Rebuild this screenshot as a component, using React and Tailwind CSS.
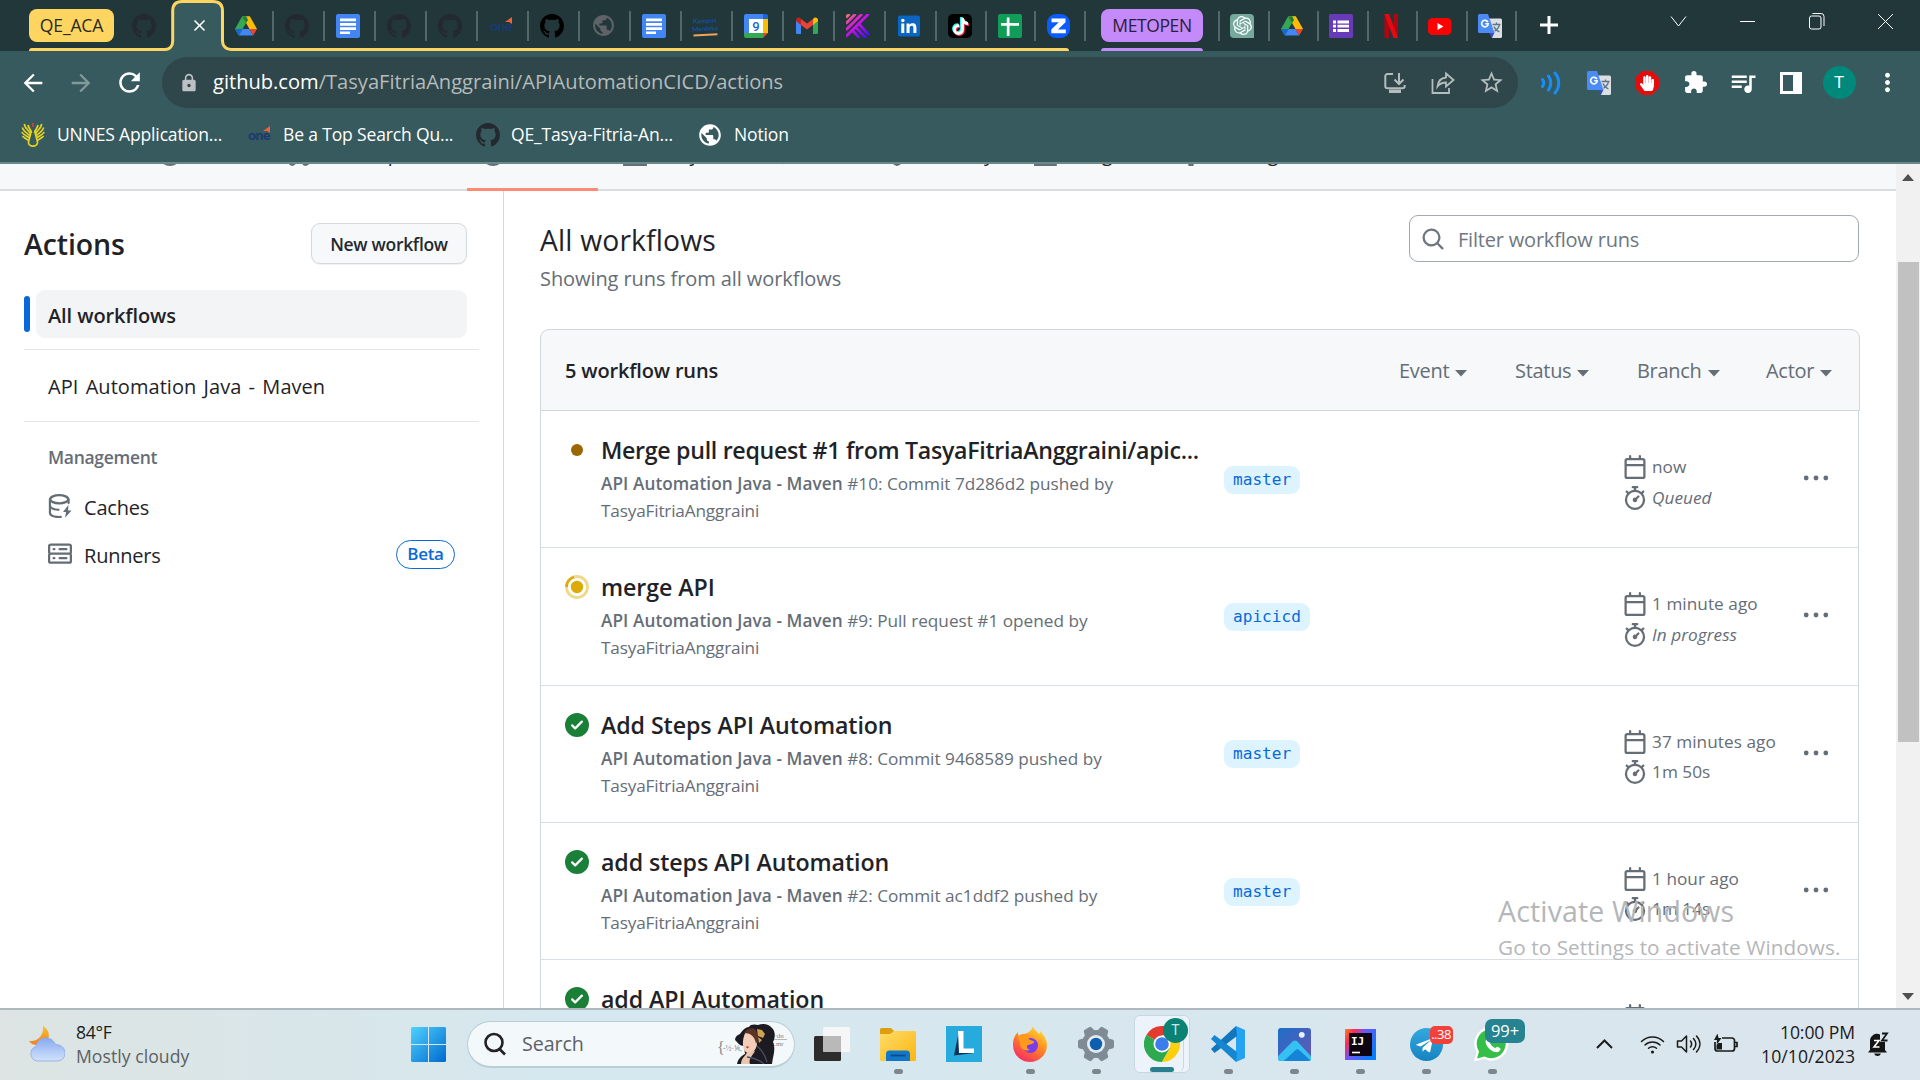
import React from "react";
import {
  MdPublic, MdExtension, MdQueueMusic, MdLock, MdStarBorder, MdRefresh, MdArrowBack,
  MdArrowForward, MdMoreVert, MdClose,
} from "react-icons/md";
import { FaHandPaper, FaTelegramPlane, FaTiktok } from "react-icons/fa";
import { SiOpenai } from "react-icons/si";

/* ---------- octicons ---------- */

function Oct({ d, className = "size-6" }) {
  return (
    <svg viewBox="0 0 16 16" fill="currentColor" className={`${className} shrink-0`}>
      <path d={d} />
    </svg>
  );
}

const MARK =
  "M8 0c4.42 0 8 3.58 8 8a8.013 8.013 0 0 1-5.45 7.59c-.4.08-.55-.17-.55-.38 0-.27.01-1.13.01-2.2 0-.75-.25-1.23-.54-1.48 1.78-.2 3.65-.88 3.65-3.95 0-.88-.31-1.59-.82-2.15.08-.2.36-1.02-.08-2.12 0 0-.67-.22-2.2.82-.64-.18-1.32-.27-2-.27-.68 0-1.36.09-2 .27-1.53-1.03-2.2-.82-2.2-.82-.44 1.1-.16 1.92-.08 2.12-.51.56-.82 1.28-.82 2.15 0 3.06 1.86 3.75 3.64 3.95-.23.2-.44.55-.51 1.07-.46.21-1.61.55-2.33-.66-.15-.24-.6-.83-1.23-.82-.67.01-.27.38.01.53.34.19.73.9.82 1.13.16.45.68 1.31 2.69.94 0 .67.01 1.3.01 1.49 0 .21-.15.45-.55.38A7.995 7.995 0 0 1 0 8c0-4.42 3.58-8 8-8Z";
const CALENDAR =
  "M4.75 0a.75.75 0 0 1 .75.75V2h5V.75a.75.75 0 0 1 1.5 0V2h1.25c.966 0 1.75.784 1.75 1.75v10.5A1.75 1.75 0 0 1 13.25 16H2.75A1.75 1.75 0 0 1 1 14.25V3.75C1 2.784 1.784 2 2.75 2H4V.75A.75.75 0 0 1 4.75 0ZM2.5 7.5v6.75c0 .138.112.25.25.25h10.5a.25.25 0 0 0 .25-.25V7.5Zm10.75-4H2.75a.25.25 0 0 0-.25.25V6h11V3.75a.25.25 0 0 0-.25-.25Z";
const STOPWATCH =
  "M5.75.75A.75.75 0 0 1 6.5 0h3a.75.75 0 0 1 0 1.5h-.75v1l-.001.041a6.724 6.724 0 0 1 3.464 1.435l.007-.006.75-.75a.749.749 0 0 1 1.275.326.749.749 0 0 1-.215.734l-.75.75-.006.007a6.75 6.75 0 1 1-10.548 0L2.72 5.03l-.75-.75a.751.751 0 0 1 .018-1.042.751.751 0 0 1 1.042-.018l.75.75.007.006A6.72 6.72 0 0 1 7.25 2.541V1.5H6.5a.75.75 0 0 1-.75-.75ZM8 14.5a5.25 5.25 0 1 0-.001-10.501A5.25 5.25 0 0 0 8 14.5Zm.389-6.7 1.33-1.33a.75.75 0 1 1 1.061 1.06L9.45 8.861A1.503 1.503 0 0 1 8 10.75a1.499 1.499 0 1 1 .389-2.95Z";
const CHECK =
  "M8 16A8 8 0 1 1 8 0a8 8 0 0 1 0 16Zm3.78-9.72a.751.751 0 0 0-.018-1.042.751.751 0 0 0-1.042-.018L6.75 9.19 5.28 7.72a.751.751 0 0 0-1.042.018.751.751 0 0 0-.018 1.042l2 2a.75.75 0 0 0 1.06 0Z";
const SEARCH =
  "M10.68 11.74a6 6 0 0 1-7.922-8.982 6 6 0 0 1 8.982 7.922l3.04 3.04a.749.749 0 0 1-.326 1.275.749.749 0 0 1-.734-.215ZM11.5 7a4.499 4.499 0 1 0-8.997 0A4.499 4.499 0 0 0 11.5 7Z";
const SERVER =
  "M1.75 1h12.5c.966 0 1.75.784 1.75 1.75v4c0 .372-.116.717-.314 1 .198.283.314.628.314 1v4a1.75 1.75 0 0 1-1.75 1.75H1.75A1.75 1.75 0 0 1 0 12.75v-4c0-.358.109-.707.314-1a1.739 1.739 0 0 1-.314-1v-4C0 1.784.784 1 1.75 1ZM1.5 2.75v4c0 .138.112.25.25.25h12.5a.25.25 0 0 0 .25-.25v-4a.25.25 0 0 0-.25-.25H1.75a.25.25 0 0 0-.25.25Zm.25 5.75a.25.25 0 0 0-.25.25v4c0 .138.112.25.25.25h12.5a.25.25 0 0 0 .25-.25v-4a.25.25 0 0 0-.25-.25ZM7 4.75A.75.75 0 0 1 7.75 4h4.5a.75.75 0 0 1 0 1.5h-4.5A.75.75 0 0 1 7 4.75ZM7.75 10h4.5a.75.75 0 0 1 0 1.5h-4.5a.75.75 0 0 1 0-1.5ZM3 4.75A.75.75 0 0 1 3.75 4h.5a.75.75 0 0 1 0 1.5h-.5A.75.75 0 0 1 3 4.75ZM3.75 10h.5a.75.75 0 0 1 0 1.5h-.5a.75.75 0 0 1 0-1.5Z";

function CacheIcon() {
  return (
    <svg viewBox="0 0 16 16" className="size-6 shrink-0" fill="none" stroke="currentColor" strokeWidth="1.5" strokeLinecap="round">
      <ellipse cx="7.5" cy="3.5" rx="6" ry="2.7" />
      <path d="M1.3 3.5v9c0 1.3 2 2.5 4.7 2.8.9.1 1.6.1 2.5 0M1.3 8c.4 1.2 2.4 2.3 5.700 2.500M13.700 3.500v2.500" />
      <path d="M13.600 7.300 10 12h2l-.6 3.800L15.700 11h-2.300z" fill="currentColor" stroke="none" />
    </svg>
  );
}

function Caret() {
  return (
    <svg viewBox="0 0 12 7" className="mt-[4px] h-[7px] w-3 shrink-0" fill="currentColor">
      <path d="M0 0h12L6 6.500z" />
    </svg>
  );
}

/* ---------- favicons ---------- */

function Drive() {
  return (
    <svg viewBox="0 0 24 24" className="size-6 shrink-0">
      <path d="M8.200 2.300h7.600L12 9z" fill="#188038" />
      <path d="M8.200 2.300 1 15l3.800 6.500L12 9z" fill="#34a853" />
      <path d="M15.800 2.300 23 15h-7.600L8.400 2.300z" fill="#fbbc04" />
      <path d="M8.200 2.300h4L14 6l-2 3z" fill="#188038" />
      <path d="M4.800 21.500h14.400L15.400 15H8.600z" fill="#4285f4" />
      <path d="M1 15h7.600l-3.800 6.500z" fill="#1967d2" />
      <path d="M23 15h-7.600l3.800 6.500z" fill="#ea4335" />
    </svg>
  );
}

function Docs() {
  return (
    <svg viewBox="0 0 24 24" className="size-6 shrink-0">
      <rect width="24" height="24" rx="2" fill="#4285f4" />
      <path d="M4 4.500h16v2.800H4zM4 9h16v2.800H4zM4 13.300h16V16H4zM4 17.500h10v2.500H4z" fill="#fff" />
    </svg>
  );
}

function One() {
  return (
    <span className="relative flex h-6 w-6 shrink-0 items-center justify-center">
      <span className="font-[Lato] text-[14px] font-black leading-none tracking-[-0.500px] text-[#1b3a6e]">one</span>
      <svg viewBox="0 0 8 8" className="absolute right-0 top-[3px] size-2">
        <path d="M0 5 7 0v7L4 5z" fill="#f0603a" />
      </svg>
    </span>
  );
}

function Kampus() {
  return (
    <span className="flex h-6 w-6 shrink-0 -rotate-3 flex-col items-center justify-center font-[Lato] text-[6.500px] font-black leading-[8px] text-[#15508f]">
      <span>Kampus</span>
      <span>Merdeka</span>
      <span className="mt-[1px] h-[2px] w-6 bg-[#f2a25c]" />
    </span>
  );
}

function Cal() {
  return (
    <svg viewBox="0 0 24 24" className="size-6 shrink-0">
      <path d="M2 0h17v5H5v14H0V2a2 2 0 0 1 2-2z" fill="#4285f4" />
      <path d="M19 0h3a2 2 0 0 1 2 2v3h-5z" fill="#1967d2" />
      <path d="M19 5h5v14h-5z" fill="#fbbc04" />
      <path d="M0 19h19v5H2a2 2 0 0 1-2-2z" fill="#34a853" />
      <path d="M19 19h5l-5 5z" fill="#ea4335" />
      <path d="M5 5h14v14H5z" fill="#fff" />
      <text x="12" y="16.700" textAnchor="middle" fontFamily="Roboto" fontSize="13" fontWeight="500" fill="#1967d2">9</text>
    </svg>
  );
}

function Gmail() {
  return (
    <svg viewBox="0 0 24 24" className="size-6 shrink-0">
      <path d="M1 6.500 6 10v10H2.500A1.500 1.500 0 0 1 1 18.500z" fill="#4285f4" />
      <path d="M23 6.500 18 10v10h3.500a1.500 1.500 0 0 0 1.500-1.500z" fill="#34a853" />
      <path d="M18 5v6l5-4V6c0-2-2.300-3.200-4-2z" fill="#fbbc04" />
      <path d="M6 5v6L1 7V6c0-2 2.300-3.200 4-2z" fill="#c5221f" />
      <path d="m6 5 6 4.500L18 5v6l-6 4.500L6 11z" fill="#ea4335" />
    </svg>
  );
}

function KLogo() {
  return (
    <svg viewBox="0 0 24 24" className="size-6 shrink-0">
      <defs>
        <linearGradient id="kg" gradientUnits="userSpaceOnUse" x1="0" y1="0" x2="22" y2="24">
          <stop offset="0" stopColor="#f77b6b" />
          <stop offset=".4" stopColor="#d914e0" />
          <stop offset="1" stopColor="#3a10f5" />
        </linearGradient>
      </defs>
      <g stroke="url(#kg)" strokeWidth="2.800" fill="none">
        <path d="M0 3.500 3.500 0M0 9.500 9.500 0M0 16 16 0M0 22.500 22.500 0M9.500 13l10.500 11M13 10l10 11M7 17l6.500 7" />
      </g>
    </svg>
  );
}

function LinkedIn() {
  return (
    <svg viewBox="0 0 24 24" className="size-6 shrink-0">
      <rect x="1" y="1.500" width="22" height="21" rx="2" fill="#0a66c2" />
      <path d="M4.300 9.500h3V19h-3zM9.500 9.500h2.900v1.300c.5-.9 1.600-1.600 3.100-1.600 3.100 0 3.900 1.900 3.900 4.600V19h-3v-4.700c0-1.200-.1-2.600-1.700-2.600s-2.100 1.200-2.100 2.500V19h-3.100z" fill="#fff" />
      <circle cx="5.800" cy="6.500" r="1.750" fill="#fff" />
    </svg>
  );
}

function TikTok() {
  return (
    <span className="relative flex size-6 shrink-0 items-center justify-center rounded-[5px] bg-black">
      <FaTiktok className="absolute left-[3px] top-[3px] size-[17px] text-[#25f4ee]" />
      <FaTiktok className="absolute left-[5px] top-[5px] size-[17px] text-[#fe2c55]" />
      <FaTiktok className="absolute left-[4px] top-[4px] size-[17px] text-white" />
    </span>
  );
}

function Sheets() {
  return (
    <svg viewBox="0 0 24 24" className="size-6 shrink-0">
      <rect width="24" height="24" rx="2" fill="#0f9d58" />
      <path d="M8.800 3.500h2.700V9H21v2.700h-9.500V22H8.800V11.700H3V9h5.800z" fill="#fff" />
    </svg>
  );
}

function ZoomLogo() {
  return (
    <svg viewBox="0 0 24 24" className="size-6 shrink-0">
      <rect width="23" height="24" rx="9" fill="#0b5cff" />
      <path d="M4.500 4.500h14v3.700l-7.500 7.300h7.800v3.800H4.300v-3.700l7.500-7.300H4.500z" fill="#fff" />
    </svg>
  );
}

function Gpt() {
  return (
    <span className="flex size-6 shrink-0 items-center justify-center rounded-[4px] rounded-br-none bg-[#75a99c]">
      <SiOpenai className="size-[19px] text-white" />
    </span>
  );
}

function Forms() {
  return (
    <svg viewBox="0 0 24 24" className="size-6 shrink-0">
      <rect width="24" height="24" rx="1.500" fill="#673ab7" />
      <path d="M4 6.500h3v3H4zM8.500 6.500H20v3H8.500zM4 10.700h3v2.800H4zM8.500 10.700H20v2.800H8.500zM4 15h3v3H4zM8.500 15H20v3H8.500z" fill="#fff" />
    </svg>
  );
}

function Netflix() {
  return (
    <svg viewBox="0 0 24 24" className="size-6 shrink-0">
      <path d="M5.500 0H10v24H5.500zM14.500 0H19v24h-4.500z" fill="#b1060f" />
      <path d="M5.500 0H10l9 24h-4.500z" fill="#e50914" />
    </svg>
  );
}

function YouTube() {
  return (
    <svg viewBox="0 0 24 24" className="size-6 shrink-0">
      <rect x="0" y="4" width="23.500" height="17" rx="4.500" fill="#f00" />
      <path d="m9.500 9 6 3.500-6 3.500z" fill="#fff" />
    </svg>
  );
}

function Translate() {
  return (
    <svg viewBox="0 0 24 24" className="size-6 shrink-0">
      <path d="M9 4.500h13.500A1.500 1.500 0 0 1 24 6v16.500a1.500 1.500 0 0 1-1.500 1.500H14z" fill="#dcdfe3" />
      <path d="m11 19 5.500-.5L14 24z" fill="#3a50b8" />
      <path d="M1.500 0H10l6.500 19h-15A1.500 1.500 0 0 1 0 17.500v-16A1.500 1.500 0 0 1 1.500 0z" fill="#4c8bf5" />
      <path d="M9.900 8.200a3.300 3.300 0 1 0 .3 1.600H7.200" stroke="#fff" strokeWidth="1.600" fill="none" />
      <path d="M14.500 10.500h8M18.500 8.500v2M21.500 10.500c-.6 3-2.500 5.300-5 6.800M16 12.500c1 2.500 3 4.500 5.500 5.500" stroke="#5f7688" strokeWidth="1.300" fill="none" />
    </svg>
  );
}

const Hub = () => <Oct d={MARK} className="size-6 text-[#24292f]" />;

/* ---------- browser chrome ---------- */

function Tab({ w, children }) {
  return (
    <div className={`flex h-[51px] items-center ${w}`}>
      {children}
      <span className="ml-auto h-[30px] w-[2px] bg-[#53676a]" />
    </div>
  );
}

function TabStrip() {
  const first = "w-[51px] pl-[11px]";
  return (
    <div className="flex h-[51px] shrink-0 bg-[#21373a]">
      <div className="relative flex w-[1087px] shrink-0 pl-[29px]">
        <div className="mt-[9px] flex h-[33px] w-[85px] shrink-0 items-center justify-center rounded-[8px] bg-[#ffd561] text-[17.600px] tracking-[-0.200px] text-[#2a2a20]">
          QE_ACA
        </div>
        <div className="ml-[18px] flex items-center">
          <Hub />
        </div>
        <span className="absolute bottom-0 left-[29px] h-[3px] w-[136px] rounded-tl-[3px] bg-[#ffd561]" />
        <span className="absolute bottom-0 left-[230px] h-[3px] w-[839px] rounded-tr-[3px] bg-[#ffd561]" />
        <div className="relative ml-[9px] flex h-[51px] w-[58px] shrink-0 items-center">
          <svg viewBox="0 0 66 51" className="absolute left-0 top-0 h-[51px] w-[66px]">
            <path d="M0 49.500C5 49.500 7.700 46 7.700 41V11C7.700 4 11 1.500 17 1.500H48C55 1.500 57.500 5 57.500 11V41C57.500 46 61 49.500 66 49.500V51H0Z" fill="#365a5d" />
            <path d="M0 49.500C5 49.500 7.700 46 7.700 41V11C7.700 4 11 1.500 17 1.500H48C55 1.500 57.500 5 57.500 11V41C57.500 46 61 49.500 66 49.500" fill="none" stroke="#ffd561" strokeWidth="3" />
          </svg>
          <MdClose className="relative ml-[25px] size-[19px] text-white" />
        </div>
        <Tab w={first}><Drive /></Tab>
        <Tab w={first}><Hub /></Tab>
        <Tab w={first}><Docs /></Tab>
        <Tab w={first}><Hub /></Tab>
        <Tab w={first}><Hub /></Tab>
        <Tab w={first}><One /></Tab>
        <Tab w={first}><Oct d={MARK} className="size-6 text-black" /></Tab>
        <Tab w={first}><MdPublic className="size-[25px] text-[#5f6368]" /></Tab>
        <Tab w={first}><Docs /></Tab>
        <Tab w={first}><Kampus /></Tab>
        <Tab w={first}><Cal /></Tab>
        <Tab w={first}><Gmail /></Tab>
        <Tab w={first}><KLogo /></Tab>
        <Tab w={first}><LinkedIn /></Tab>
        <Tab w="w-[50px] pl-[11px]"><TikTok /></Tab>
        <Tab w="w-[49px] pl-[11px]"><Sheets /></Tab>
        <Tab w="w-[50px] pl-[11px]"><ZoomLogo /></Tab>
      </div>
      <div className="ml-[14px] flex w-[102px] shrink-0 flex-col justify-between pt-[9px]">
        <div className="flex h-[33px] items-center justify-center rounded-[8px] bg-[#c58af9] text-[17.500px] tracking-[-0.400px] text-[#2a2038]">
          METOPEN
        </div>
        <span className="h-[3px] rounded-t-[3px] bg-[#c58af9]" />
      </div>
      <span className="ml-[15px] mt-[11px] h-[30px] w-[2px] bg-[#53676a]" />
      <Tab w="w-[50px] pl-[10px]"><Gpt /></Tab>
      <Tab w="w-[49px] pl-[10px]"><Drive /></Tab>
      <Tab w="w-[50px] pl-[10px]"><Forms /></Tab>
      <Tab w="w-[49px] pl-[10px]"><Netflix /></Tab>
      <Tab w="w-[50px] pl-[10px]"><YouTube /></Tab>
      <Tab w="w-[49px] pl-[10px]"><Translate /></Tab>
      <svg viewBox="0 0 20 20" className="ml-[22px] mt-[15px] size-5 shrink-0">
        <path d="M10 1v18M1 10h18" stroke="#fff" strokeWidth="3" />
      </svg>
      <div className="ml-auto flex h-[43px] shrink-0 items-center text-white">
        <WinButton><path d="M2 4.500 9.500 14 17 4.500" /></WinButton>
        <WinButton><path d="M2 9.500h15" /></WinButton>
        <WinButton><path d="M2.500 6a2 2 0 0 1 2-2h7.500a2 2 0 0 1 2 2v9a2 2 0 0 1-2 2h-7.500a2 2 0 0 1-2-2zM5.500 1.500h8.500a3 3 0 0 1 3 3v9.500" /></WinButton>
        <WinButton><path d="m2 2 15 15M17 2 2 17" /></WinButton>
      </div>
    </div>
  );
}

function WinButton({ children }) {
  return (
    <span className="flex w-[69px] justify-center">
      <svg viewBox="0 0 19 19" className="size-[19px]" fill="none" stroke="currentColor" strokeWidth="1">{children}</svg>
    </span>
  );
}

function Slot({ children }) {
  return <span className="flex w-12 shrink-0 items-center justify-center">{children}</span>;
}

function Toolbar() {
  return (
    <div className="flex h-[63px] shrink-0 items-center bg-[#365a5d] pl-[9px] text-white">
      <Slot><MdArrowBack className="size-[28px]" /></Slot>
      <Slot><MdArrowForward className="size-[28px] text-[#839a9c]" /></Slot>
      <Slot><MdRefresh className="size-[31px]" /></Slot>
      <div className="ml-[9px] flex h-[51px] w-[1356px] shrink-0 items-center rounded-full bg-[#2f464a] pl-[17px] pr-[3px] text-[#b4bcbd]">
        <MdLock className="size-[20px] text-[#bdc1c6]" />
        <span className="ml-[14px] text-[20.100px]">
          <span className="text-white">github.com</span>/TasyaFitriaAnggraini/APIAutomationCICD/actions
        </span>
        <span className="ml-auto flex">
          <Slot>
            <svg viewBox="0 0 24 24" className="size-6" fill="none" stroke="currentColor" strokeWidth="2">
              <path d="M10 3H4.500A2.200 2.200 0 0 0 2.300 5.200V15c0 1.200 1 2.200 2.200 2.200h15c1.200 0 2.200-1 2.200-2.200v-1M16 2v10M11.500 8.500 16 13l4.500-4.500" />
              <path d="M6 18.500h12V22H6z" fill="currentColor" stroke="none" />
            </svg>
          </Slot>
          <Slot>
            <svg viewBox="0 0 24 24" className="size-6" fill="none" stroke="currentColor" strokeWidth="1.800">
              <path d="M1.500 8v14H18v-5M15 2.500l7.500 6.500-7.500 6.500v-4c-4 0-6.500 1.300-8.500 4C7 10.500 10 7 15 6.500z" />
            </svg>
          </Slot>
          <Slot><MdStarBorder className="size-[27px]" /></Slot>
        </span>
      </div>
      <div className="ml-[9px] flex">
        <Slot>
          <svg viewBox="0 0 22 24" className="h-6 w-[22px]" fill="none" stroke="#1a8cf5" strokeWidth="3" strokeLinecap="round">
            <path d="M2.500 8.500c1.500 2 1.500 5 0 7M8.500 5c3 4 3 10 0 14M15 2c5 6 5 14 0 20" />
          </svg>
        </Slot>
        <Slot><Translate /></Slot>
        <Slot>
          <span className="relative flex size-6 items-center justify-center">
            <svg viewBox="0 0 24 24" className="absolute size-6"><path d="M7 0h10l7 7v10l-7 7H7l-7-7V7z" fill="#e40d0d" /></svg>
            <FaHandPaper className="relative size-[16px]" />
          </span>
        </Slot>
        <Slot><MdExtension className="size-[25px]" /></Slot>
        <Slot><MdQueueMusic className="size-[30px]" /></Slot>
        <Slot>
          <svg viewBox="0 0 22 22" className="size-[22px]"><path d="M0 0h22v22H0zM3 3v16h10V3z" fill="#fff" fillRule="evenodd" /></svg>
        </Slot>
        <Slot><span className="flex size-[33px] items-center justify-center rounded-full bg-[#00897b] font-[Roboto] text-[17px] text-white">T</span></Slot>
        <Slot><MdMoreVert className="size-[29px]" /></Slot>
      </div>
    </div>
  );
}

function Bookmarks() {
  return (
    <div className="flex h-[50px] shrink-0 items-center border-b-2 border-[#6a8789] bg-[#365a5d] pb-[7px] pl-[21px] text-[17.500px] tracking-[-0.150px] text-white">
      <svg viewBox="0 0 24 24" className="size-6" fill="none" stroke="#e8d322" strokeWidth="1.700">
        <path d="M3.500.8c-.5 3.500 3 5 6 10M1.500 4.500c0 3 4 5 7.500 8.500M.8 9c1.200 2.500 4 3.500 7.500 6M1.500 13c1.500 2 4 2.500 6 4.500M7 2c.5 3 3 5 3.500 8M20.500.8c.5 3.500-3 5-6 10M22.500 4.500c0 3-4 5-7.500 8.500M23.200 9c-1.200 2.500-4 3.500-7.500 6M22.500 13c-1.500 2-4 2.500-6 4.500M17 2c-.5 3-3 5-3.500 8M10 7c0 6-2.500 9-2.500 12.500a4.500 3.600 0 0 0 9 0C16.500 16 14 13 14 7" />
        <path d="M12 0v4" stroke="#e53935" />
      </svg>
      <span className="ml-[12px] w-[190px]">UNNES Application...</span>
      <One />
      <span className="ml-[12px] w-[193px]">Be a Top Search Qu...</span>
      <Hub />
      <span className="ml-[11px] w-[186px]">QE_Tasya-Fitria-An...</span>
      <MdPublic className="size-[26px]" />
      <span className="ml-[11px]">Notion</span>
    </div>
  );
}

/* ---------- GitHub page ---------- */

const navIcons = {
  code: "m5 4-4 4 4 4M11 4l4 4-4 4",
  issue: "M8 .8a7.200 7.200 0 1 0 0 14.400A7.200 7.200 0 0 0 8 .8zM8 7.500v1",
  pull: "M3.500 5.500v7M12.500 12V6a2 2 0 0 0-2-2H8M1.800 13.500a1.700 1.700 0 1 0 3.400 0 1.700 1.700 0 0 0-3.400 0M10.800 13.500a1.700 1.700 0 1 0 3.400 0 1.700 1.700 0 0 0-3.400 0",
  play: "M8 .8a7.200 7.200 0 1 0 0 14.400A7.200 7.200 0 0 0 8 .8zM6.500 5.500v5l4-2.500z",
  table: "M.8 2h14.400v13.200H.8zM.8 6h14.400M5.500 6v9",
  book: "M8 13.500V3.500M.8 2h5L8 3.500 10.200 2h5v11H10L8 14l-2-1H.8z",
  shield: "M8 .8 14 3v5c0 4-3 6-6 7.300C5 14 2 12 2 8V3z",
  graph: "M.8 1v14.200h14.400M4 11l3-3 3 2 5-5",
  gear: "M8 5.500a2.500 2.500 0 1 0 0 5 2.500 2.500 0 0 0 0-5zM7 .8h2l.5 2 2 1 2-.6 1 1.700-1.400 1.600v2.500l1.400 1.600-1 1.700-2-.6-2 1-.5 2.500H7l-.5-2.500-2-1-2 .6-1-1.700 1.400-1.600V6.500L1.500 4.900l1-1.700 2 .6 2-1z",
};

function NavItem({ w, icon, children }) {
  return (
    <span className={`flex shrink-0 items-center gap-[12px] ${w}`}>
      <svg viewBox="0 0 16 16" className="size-6 text-[#656d76]" fill="none" stroke="currentColor" strokeWidth="1.500">
        <path d={navIcons[icon]} />
      </svg>
      {children}
    </span>
  );
}

function RepoNav() {
  return (
    <div className="relative h-[27px] shrink-0 overflow-hidden border-b-2 border-[#d8dee4] bg-[#f6f8fa]">
      <div className="-mt-[25px] flex h-[30px] items-center pl-[37px] text-[20px] leading-[30px] tracking-[-0.200px] text-[#1f2328]">
        <NavItem w="w-[121px]" icon="code">Code</NavItem>
        <NavItem w="w-[129px]" icon="issue">Issues</NavItem>
        <NavItem w="w-[194px]" icon="pull">Pull requests</NavItem>
        <NavItem w="w-[142px]" icon="play">Actions</NavItem>
        <NavItem w="w-[148px]" icon="table">Projects</NavItem>
        <NavItem w="w-[114px]" icon="book">Wiki</NavItem>
        <NavItem w="w-[149px]" icon="shield">Security</NavItem>
        <NavItem w="w-[145px]" icon="graph">Insights</NavItem>
        <NavItem w="w-[140px]" icon="gear">Settings</NavItem>
      </div>
    </div>
  );
}

function Sidebar() {
  return (
    <div className="flex w-[504px] shrink-0 flex-col border-r border-[#d0d7de] pl-6 pt-8 text-[20px] tracking-[-0.200px] text-[#1f2328]">
      <div className="flex h-[41px] items-center justify-between pr-9">
        <h2 className="pt-[1px] text-[28.500px] font-semibold tracking-[-0.100px]">Actions</h2>
        <button className="flex h-[41px] w-[156px] items-center justify-center rounded-[9px] border border-[#d5d8da] bg-[#f6f8fa] pt-[2px] text-[17.500px] font-semibold tracking-[-0.300px] text-[#24292f] shadow-[0_1px_0_rgba(31,35,40,0.06)]">
          New workflow
        </button>
      </div>
      <div className="mt-[26px] flex h-12 items-center">
        <span className="h-9 w-[6px] rounded-[3px] bg-[#0969da]" />
        <span className="ml-[6px] flex h-12 w-[431px] items-center rounded-[9px] bg-[#f3f4f6] pl-3 pt-[3px] font-semibold tracking-[-0.100px]">
          All workflows
        </span>
      </div>
      <div className="mt-[11px] h-[73px] w-[455px] border-y border-[#e3e6e9] pl-6 pt-[2px] leading-[70px] tracking-[0.050px] [word-spacing:2px]">
        API Automation Java - Maven
      </div>
      <div className="mt-[20px] pl-6 text-[17.500px] font-semibold leading-[30px] tracking-[-0.300px] text-[#656d76]">Management</div>
      <div className="mt-[10px] flex h-[48px] items-center gap-[12px] pl-6">
        <span className="text-[#656d76]"><CacheIcon /></span>
        <span className="pt-[3px]">Caches</span>
      </div>
      <div className="flex h-[48px] items-center gap-[12px] pl-6">
        <span className="text-[#656d76]"><Oct d={SERVER} /></span>
        <span className="pt-[3px]">Runners</span>
        <span className="ml-auto mr-12 flex h-[29px] w-[59px] items-center justify-center rounded-full border-[1.500px] border-[#0969da] text-[17px] font-semibold tracking-[-0.300px] text-[#0969da]">
          Beta
        </span>
      </div>
    </div>
  );
}

const runs = [
  { state: "queued", title: "Merge pull request #1 from TasyaFitriaAnggraini/apic...", tight: true, info: "#10: Commit 7d286d2 pushed by", branch: "master", when: "now", took: "Queued", live: true },
  { state: "running", title: "merge API", info: "#9: Pull request #1 opened by", branch: "apicicd", when: "1 minute ago", took: "In progress", live: true },
  { state: "ok", title: "Add Steps API Automation", info: "#8: Commit 9468589 pushed by", branch: "master", when: "37 minutes ago", took: "1m 50s" },
  { state: "ok", title: "add steps API Automation", info: "#2: Commit ac1ddf2 pushed by", branch: "master", when: "1 hour ago", took: "1m 14s" },
  { state: "ok", title: "add API Automation" },
];

function StateIcon({ state }) {
  if (state === "queued") {
    return <span className="m-[6px] block size-3 rounded-full bg-[#9a6700]" />;
  }
  if (state === "running") {
    return (
      <svg viewBox="0 0 24 24" className="size-6" fill="none">
        <circle cx="12" cy="12" r="10.500" stroke="#f0d98c" strokeWidth="2.800" />
        <path d="M1.500 12A10.500 10.500 0 0 1 9 2" stroke="#dbab0a" strokeWidth="2.800" />
        <circle cx="12" cy="12" r="6.200" fill="#dbab0a" />
      </svg>
    );
  }
  return <Oct d={CHECK} className="size-6 text-[#1a7f37]" />;
}

function Run({ run }) {
  return (
    <div className="flex h-[137.330px] shrink-0 border-b border-[#d8dee4] pl-6 text-[17.200px] text-[#656d76]">
      <div className="mt-[27px] h-6 w-6 shrink-0"><StateIcon state={run.state} /></div>
      <div className="ml-3 mt-[23px] w-[623px] shrink-0">
        <div className={`h-[33px] whitespace-nowrap text-[23.200px] font-semibold leading-[33px] text-[#1f2328] ${run.tight ? "tracking-[-0.310px]" : "tracking-[-0.080px]"}`}>{run.title}</div>
        {run.info && (
          <div className="mt-[3px] w-[560px] leading-[27px] tracking-[0px]">
            <span className="font-semibold tracking-[0.080px]">API Automation Java - Maven</span> {run.info}
            <br />
            <span className="tracking-[-0.170px]">TasyaFitriaAnggraini</span>
          </div>
        )}
      </div>
      <div className="flex w-[399px] shrink-0 items-center pt-px">
        {run.branch && (
          <span className="rounded-[9px] bg-[#ddf4ff] px-[9px] font-['DejaVu_Sans_Mono',monospace] text-[16.100px] leading-[28px] text-[#0969da]">{run.branch}</span>
        )}
      </div>
      <div className="mt-[44px] flex w-[181px] shrink-0 flex-col gap-[6.500px] leading-6 tracking-[0.050px]">
        <span className="flex items-center gap-[5px]"><Oct d={CALENDAR} />{run.when}</span>
        <span className={run.live ? "flex items-center gap-[5px] italic" : "flex items-center gap-[5px]"}><Oct d={STOPWATCH} />{run.took}</span>
      </div>
      <svg viewBox="0 0 26 6" className="-ml-px mt-[64px] h-[6px] w-[26px]" fill="currentColor">
        <circle cx="3.200" cy="3" r="2.400" /><circle cx="13" cy="3" r="2.400" /><circle cx="22.800" cy="3" r="2.400" />
      </svg>
    </div>
  );
}

function Filter({ w, children }) {
  return <span className={`flex items-center gap-[6px] ${w}`}>{children}<Caret /></span>;
}

function Workflows() {
  return (
    <div className="flex w-[1392px] shrink-0 flex-col pl-9">
      <div className="flex h-[138px] justify-between pr-[37px]">
        <div className="pt-[27px]">
          <h1 className="text-[28.300px] leading-[44px] tracking-[0.150px] text-[#1f2328]">All workflows</h1>
          <p className="text-[20px] leading-[33px] tracking-[-0.080px] text-[#656d76]">Showing runs from all workflows</p>
        </div>
        <div className="mt-[24px] flex h-[47px] w-[450px] items-center gap-[13px] rounded-[9px] border-[1.500px] border-[#a3a9b1] pl-[11px] text-[20px] tracking-[-0.200px] text-[#6e7781]">
          <Oct d={SEARCH} />
          <span className="pt-[3px]">Filter workflow runs</span>
        </div>
      </div>
      <div className="flex h-[82px] w-[1320px] shrink-0 items-center rounded-t-[9px] border border-[#d0d7de] bg-[#f6f8fa] pl-6 pt-[2px] text-[20px] tracking-[-0.300px] text-[#656d76]">
        <span className="w-[834px] font-semibold tracking-[-0.170px] text-[#1f2328]">5 workflow runs</span>
        <Filter w="w-[116px]">Event</Filter>
        <Filter w="w-[122px]">Status</Filter>
        <Filter w="w-[129px]">Branch</Filter>
        <Filter w="w-[82px]">Actor</Filter>
      </div>
      <div className="h-[597px] w-[1319px] overflow-hidden border-x border-[#d0d7de]">
        {runs.map((r, i) => <Run key={i} run={r} />)}
      </div>
    </div>
  );
}

function Scrollbar() {
  return (
    <div className="flex w-6 shrink-0 flex-col items-center bg-[#f1f1f1]">
      <svg viewBox="0 0 12 7" className="mt-[10px] h-[7px] w-3"><path d="M6 0l6 7H0z" fill="#505050" /></svg>
      <div className="mt-[81px] h-[480px] w-[21px] bg-[#c1c1c1]" />
      <svg viewBox="0 0 12 7" className="mb-[8px] mt-auto h-[7px] w-3"><path d="M0 0h12L6 7z" fill="#505050" /></svg>
    </div>
  );
}

/* ---------- taskbar ---------- */

function Portrait() {
  return (
    <svg viewBox="0 0 74 40" className="h-10 w-[74px]">
      <g fontFamily="Liberation Serif" fill="#888">
        <text x="0" y="29" fontSize="16">{"{"}</text>
        <text x="6" y="27" fontSize="8">-½·⅙,</text>
        <text x="52" y="14" fontSize="7">(x·dn</text>
        <text x="52" y="22" fontSize="7">m.mr</text>
      </g>
      <path d="M50 15.500h20" stroke="#999" strokeWidth=".7" />
      <path d="M20 40c1-5 4-8 8-10l-1-8c-4 0-6-3-9-6 0-3 2-5 5-6 2-3 5-7 9-7 1-3 6-3 9-2 5-2 11-1 14 3 4 4 3 10 1 14 3 8 0 13-1 22z" fill="#1c1b21" />
      <path d="M29 8c-4 5-5 21 3 21 6 0 9-7 8-14-2-5-8-11-11-7z" fill="#f3cfba" />
      <path d="M27 9c4-6 11-6 13-1 2 5 1 9-1 12-1-8-6-11-12-11z" fill="#5b3426" />
      <path d="M30 28c-1 4-6 6-6 12h9c-2-5 3-9 5-13z" fill="#ecc5b0" />
      <path d="m28.500 22.500 4 0-2 2z" fill="#b9342c" />
      <path d="m40 5 5 1 3 4-2 4-5-2zM41 13l4 3-3 3z" fill="#cfa154" />
      <path d="M30 33c6 1 12 2 17 7M40 22c5 4 8 9 10 16" stroke="#4b4f66" strokeWidth="1.300" fill="none" />
    </svg>
  );
}

function AppSlot({ children, running }) {
  return (
    <span className="relative flex h-[69px] w-[66px] shrink-0 items-center justify-center">
      {children}
      {running && <span className="absolute bottom-[5px] h-[5px] w-[9px] rounded-full bg-[#7c868b]" />}
    </span>
  );
}

function Taskbar() {
  return (
    <div className="flex h-[72px] shrink-0 items-center border-t-2 border-[#adb9bf] bg-linear-to-r from-[#dde4e3] via-[#d5e8ef] via-30% to-[#dbe5ed] pb-[2px] text-[#1b1b1b]">
      <svg viewBox="0 0 36 36" className="ml-[29px] size-9 shrink-0">
        <defs>
          <linearGradient id="cl" x1="0" y1="0" x2="0" y2="1"><stop offset="0" stopColor="#86aaf0" /><stop offset="1" stopColor="#d3e2fb" /></linearGradient>
          <linearGradient id="mo" x1="0" y1="0" x2="0" y2="1"><stop offset="0" stopColor="#f7c22f" /><stop offset="1" stopColor="#ef8024" /></linearGradient>
        </defs>
        <path d="M14 0c9 5 8 19-5 19-4 0-7-1-9-4 9 1 15-6 14-15z" fill="url(#mo)" />
        <path d="M8 35a7.500 7.500 0 0 1-1-14.500C8 15 12 12 17 12c5 0 8 3 9.500 6.500 5 0 9.500 3 9.500 8.500s-4 8-8 8z" fill="url(#cl)" stroke="#89a8e4" strokeWidth=".8" />
      </svg>
      <div className="ml-[11px] w-[335px] text-[17.600px] leading-6">
        <div className="tracking-[-0.300px]">84°F</div>
        <div className="tracking-[0.050px] text-[#5b6064]">Mostly cloudy</div>
      </div>
      <svg viewBox="0 0 35 35" className="size-[35px] shrink-0">
        <defs><linearGradient id="wi" x1="0" y1="0" x2="1" y2="1"><stop offset="0" stopColor="#4fd2ff" /><stop offset="1" stopColor="#0069cd" /></linearGradient></defs>
        <path d="M1 0h16v17H0V1zM18 0h16l1 1v16H18zM0 18h17v17H1l-1-1zM18 18h17v16l-1 1H18z" fill="url(#wi)" />
      </svg>
      <div className="ml-[21px] flex h-[47px] w-[328px] shrink-0 items-center rounded-full border border-b-2 border-[#b9cdd6] bg-[#f3f8fb] pl-[15px] pr-[3px] text-[19.700px] tracking-[-0.100px] text-[#5c6166]">
        <svg viewBox="0 0 24 24" className="size-[24px]" fill="none" stroke="#222" strokeWidth="2.600"><circle cx="11" cy="10.500" r="8.500" /><path d="m16.500 17 5.500 5.500" /></svg>
        <span className="ml-[15px]">Search</span>
        <span className="ml-auto"><Portrait /></span>
      </div>
      <span className="w-[4px]" />
      <AppSlot>
        <svg viewBox="0 0 36 36" className="size-9">
          <rect x="0" y="10" width="27" height="25" rx="1.500" fill="#2c2c2c" />
          <rect x="9" y="1" width="27" height="25" rx="1.500" fill="#f6f6f6" />
          <path d="M9 10h18v16H10.500L9 24.500z" fill="#b9b9b9" />
        </svg>
      </AppSlot>
      <AppSlot running>
        <svg viewBox="0 0 36 36" className="size-9">
          <defs><linearGradient id="fo" x1="0" y1="0" x2="1" y2="1"><stop offset="0" stopColor="#ffdc6b" /><stop offset="1" stopColor="#fbb60e" /></linearGradient></defs>
          <path d="M0 3.500A1.500 1.500 0 0 1 1.500 2H11l3.500 3.500V12H0z" fill="#dd9f0e" />
          <path d="M0 8h10l4-3h20.500A1.500 1.500 0 0 1 36 6.500v27a1.500 1.500 0 0 1-1.500 1.500h-33A1.500 1.500 0 0 1 0 33.500z" fill="url(#fo)" />
          <path d="M6 35V28a3.500 3.500 0 0 1 3.500-3.500h17A3.500 3.500 0 0 1 30 28v7z" fill="#1277c9" />
          <path d="M10.500 29.500h15" stroke="#0a4d8c" strokeWidth="1.800" />
        </svg>
      </AppSlot>
      <AppSlot>
        <svg viewBox="0 0 36 36" className="size-9">
          <rect width="36" height="36" fill="#27abdd" />
          <path d="m13 5-5 24.500 20-2.500H14z" fill="#0d3356" />
          <path d="M12 5h5.500v17.500H28V27H13z" fill="#fff" />
        </svg>
      </AppSlot>
      <AppSlot running>
        <svg viewBox="0 0 36 36" className="size-9">
          <defs><linearGradient id="ff" x1=".8" y1="0" x2=".2" y2="1"><stop offset="0" stopColor="#ffe337" /><stop offset=".45" stopColor="#ff8a1f" /><stop offset="1" stopColor="#f5246b" /></linearGradient></defs>
          <path d="M21 0c1 4 4 5 6 8 1-1 1-2 1-3 5 5 7 10 7 14 0 10-8 17-17 17S1 29 1 19C1 13 3 9 6 6c0 2 0 3 1 4 2-2 3-2 5-2 5-1 8-4 9-8z" fill="url(#ff)" />
          <circle cx="18.500" cy="19.500" r="7.500" fill="#7a3be8" />
          <path d="M5 10c4-2 10-1 12 3 1 2 5 1 5 3s-4 2-6 3-1 4 2 5c-6 2-11-3-10-8z" fill="#ff9a1f" />
        </svg>
      </AppSlot>
      <AppSlot running>
        <svg viewBox="0 0 36 36" className="size-9">
          <g fill="#7e8b94">
            <circle cx="18" cy="18" r="14" />
            <path id="tooth" d="M28 12l6.500 1.500q1.500.5 1.500 2v5q0 1.500-1.500 2L28 24z" />
            <use href="#tooth" transform="rotate(60 18 18)" />
            <use href="#tooth" transform="rotate(120 18 18)" />
            <use href="#tooth" transform="rotate(180 18 18)" />
            <use href="#tooth" transform="rotate(240 18 18)" />
            <use href="#tooth" transform="rotate(300 18 18)" />
          </g>
          <circle cx="18" cy="18" r="9" fill="#e4ebf0" />
          <circle cx="18" cy="18" r="6.200" fill="#0c5fae" />
        </svg>
      </AppSlot>
      <AppSlot>
        <span className="relative flex h-[58px] w-[56px] items-center justify-center rounded-[6px] border border-[#c5d9e2] bg-[#ecf3fa]">
          <span className="absolute right-[5px] top-0 h-[56px] w-[8px] rounded-r-[6px] border-r border-[#c5d9e2]" />
          <svg viewBox="0 0 36 36" className="relative size-9">
            <path d="M18 18 2.400 9A18 18 0 0 1 33.600 9z" fill="#e33b2e" />
            <path d="M18 18 2.400 9A18 18 0 0 0 18 36l8-14z" fill="#2da94f" />
            <path d="M18 9h15.600A18 18 0 0 1 18 36l7.800-13.500z" fill="#fdd00f" />
            <circle cx="18" cy="18" r="8.500" fill="#fff" />
            <circle cx="18" cy="18" r="6.800" fill="#3b7ded" />
          </svg>
          <span className="absolute left-[28px] top-[2px] flex size-[25px] items-center justify-center rounded-full bg-[#0b8274] font-[Roboto] text-[14px] text-[#cde8e3]">T</span>
          <span className="absolute bottom-0 h-[5px] w-[24px] rounded-full bg-[#28808f]" />
        </span>
      </AppSlot>
      <AppSlot running>
        <svg viewBox="0 0 36 36" className="size-9">
          <path d="M26 0v36l9-4V4z" fill="#24a3f2" />
          <path d="M26 0 1 23l3.500 4L27 10z" fill="#1176bd" />
          <path d="M26 36 1 13l3.500-4L27 26z" fill="#1587d0" />
        </svg>
      </AppSlot>
      <AppSlot running>
        <svg viewBox="0 0 34 34" className="size-[33px]">
          <defs><linearGradient id="ph" x1="0" y1="0" x2="1" y2="1"><stop offset="0" stopColor="#1d6fc8" /><stop offset="1" stopColor="#6a55b5" /></linearGradient></defs>
          <rect width="34" height="34" rx="3" fill="url(#ph)" />
          <path d="M0 29 15 14q2.500-2.500 5 0l14 15v3q0 2-2 2H3q-3 0-3-3z" fill="#35c2f2" />
          <path d="m6 34 12-11q2-2 4 0l11 10q-1 1-2 1z" fill="#1483d8" />
          <circle cx="24.500" cy="7" r="3" fill="#e9f3fb" />
        </svg>
      </AppSlot>
      <AppSlot running>
        <svg viewBox="0 0 31 31" className="size-[31px]">
          <defs><linearGradient id="ij" x1="0" y1="0" x2="1" y2=".6"><stop offset="0" stopColor="#fc801d" /><stop offset=".25" stopColor="#fe2857" /><stop offset=".5" stopColor="#6b57ff" /><stop offset="1" stopColor="#087cfa" /></linearGradient></defs>
          <rect width="31" height="31" fill="url(#ij)" />
          <rect x="4" y="4" width="23" height="23" fill="#0d0410" />
          <path d="M7 23.500h8" stroke="#fff" strokeWidth="1.600" />
          <text x="6" y="15.500" fontFamily="DejaVu Sans Mono" fontWeight="700" fontSize="11" fill="#fff">IJ</text>
        </svg>
      </AppSlot>
      <AppSlot running>
        <span className="relative flex size-[33px] items-center justify-center rounded-full bg-linear-to-b from-[#33a8e0] to-[#1683c0]">
          <FaTelegramPlane className="mr-[3px] mt-[2px] size-[19px] text-white" />
          <span className="absolute -top-[2px] left-[20px] flex h-[18px] w-[23px] items-center justify-center rounded-[5px] bg-[#f2413b] text-[13px] tracking-[-0.500px] text-white">..38</span>
        </span>
      </AppSlot>
      <AppSlot running>
        <span className="relative flex size-[34px] items-center justify-center">
          <svg viewBox="0 0 36 36" className="absolute size-[36px]">
            <path d="M0 35.500 2.500 26A17 17 0 1 1 10 33z" fill="#fff" />
            <path d="M3 32.500 5 25.500A14.500 14.500 0 1 1 10.500 30.500z" fill="#36bf48" />
          </svg>
          <svg viewBox="0 0 20 20" className="relative mt-[2px] size-[19px]"><path d="M5 2c1.500-1.500 2.500 0 3.500 2.500.4 1-1.500 2-1 3 1 2 3 4 5 5 1 .5 2-1.500 3-1 2.500 1 4 2 2.500 3.500-1.500 2-3.500 2.500-6.500 1.500C7 15 4 11 3 8c-.7-2.500 0-4.500 2-6z" fill="#fff" /></svg>
          <span className="absolute -top-[8px] left-[10px] flex h-6 w-10 items-center justify-center rounded-[7px] bg-[#268390] text-[16.500px] tracking-[-0.100px] text-white">99+</span>
        </span>
      </AppSlot>
      <div className="ml-auto flex items-center">
        <svg viewBox="0 0 17 10" className="mr-[27px] h-[10px] w-[17px]" fill="none" stroke="#1b1b1b" strokeWidth="2"><path d="m1 9 7.500-7.500L16 9" /></svg>
        <svg viewBox="0 0 24 20" className="mr-[11px] h-[20px] w-[25px]" fill="none" stroke="#1b1b1b" strokeWidth="1.500" strokeLinecap="round">
          <path d="M1 7.500a15.500 15.500 0 0 1 22 0M4.500 11a10.600 10.600 0 0 1 15 0M8 14.300a5.700 5.700 0 0 1 8 0" /><circle cx="12" cy="18" r="1.600" fill="#1b1b1b" stroke="none" />
        </svg>
        <svg viewBox="0 0 24 20" className="mr-[12px] h-[20px] w-[25px]" fill="none" stroke="#1b1b1b" strokeWidth="1.500" strokeLinejoin="round" strokeLinecap="round">
          <path d="M1 7h4l5-5v16l-5-5H1zM14 7c1.500 2 1.500 4 0 6M17 4.500c3 3.500 3 7.500 0 11M20 2c4.500 5 4.500 11 0 16" />
        </svg>
        <svg viewBox="0 0 25 20" className="mr-[12px] h-[20px] w-[25px]" fill="none" stroke="#1b1b1b" strokeWidth="1.700">
          <path d="M9 4h10a2.500 2.500 0 0 1 2.500 2.500v8A2.500 2.500 0 0 1 19 17H4.500A2.500 2.500 0 0 1 2 14.500V8M22 8.500h2v4h-2" />
          <path d="M3.500 9H9v6.500H3.500zM4.500-.5 1 6h3L3.500 11 8.500 4H5.500z" fill="#1b1b1b" stroke="none" />
        </svg>
        <div className="w-[105px] text-right text-[17.600px] leading-6">
          <div className="tracking-[-0.100px]">10:00 PM</div>
          <div className="tracking-[0.050px]">10/10/2023</div>
        </div>
        <svg viewBox="0 0 22 24" className="ml-[12px] mr-[31px] h-6 w-[22px]">
          <path d="M3 18V9a7 7 0 0 1 10-6.500V10h5v8l2 2.500H1zM7 21.500h7q-1 2.500-3.500 2.500T7 21.500z" fill="#151515" />
          <path d="M7 8.500h5l-5 6.500h5.500" stroke="#fff" strokeWidth="1.600" fill="none" />
          <path d="M15 1.500h5l-5 7h5.500" stroke="#151515" strokeWidth="1.800" fill="none" />
        </svg>
      </div>
    </div>
  );
}

export default function App() {
  return (
    <div className="relative flex h-[1080px] w-[1920px] flex-col overflow-hidden bg-white font-['Open_Sans','Noto_Sans',sans-serif]">
      <TabStrip />
      <Toolbar />
      <Bookmarks />
      <div className="flex h-[844px] shrink-0">
        <div className="relative flex w-[1896px] shrink-0 flex-col">
          <RepoNav />
          <span className="absolute left-[467px] top-[24px] h-[3px] w-[131px] bg-[#fd8c73]" />
          <div className="flex h-[817px]">
            <Sidebar />
            <Workflows />
          </div>
        </div>
        <Scrollbar />
      </div>
      <Taskbar />
      <div className="pointer-events-none absolute left-[1498px] top-[891px] text-[#b4b6b8]">
        <div className="text-[28.500px] leading-[40px] tracking-[0.150px]">Activate Windows</div>
        <div className="mt-px text-[20.700px] leading-[30px] tracking-[0.100px]">Go to Settings to activate Windows.</div>
      </div>
    </div>
  );
}
